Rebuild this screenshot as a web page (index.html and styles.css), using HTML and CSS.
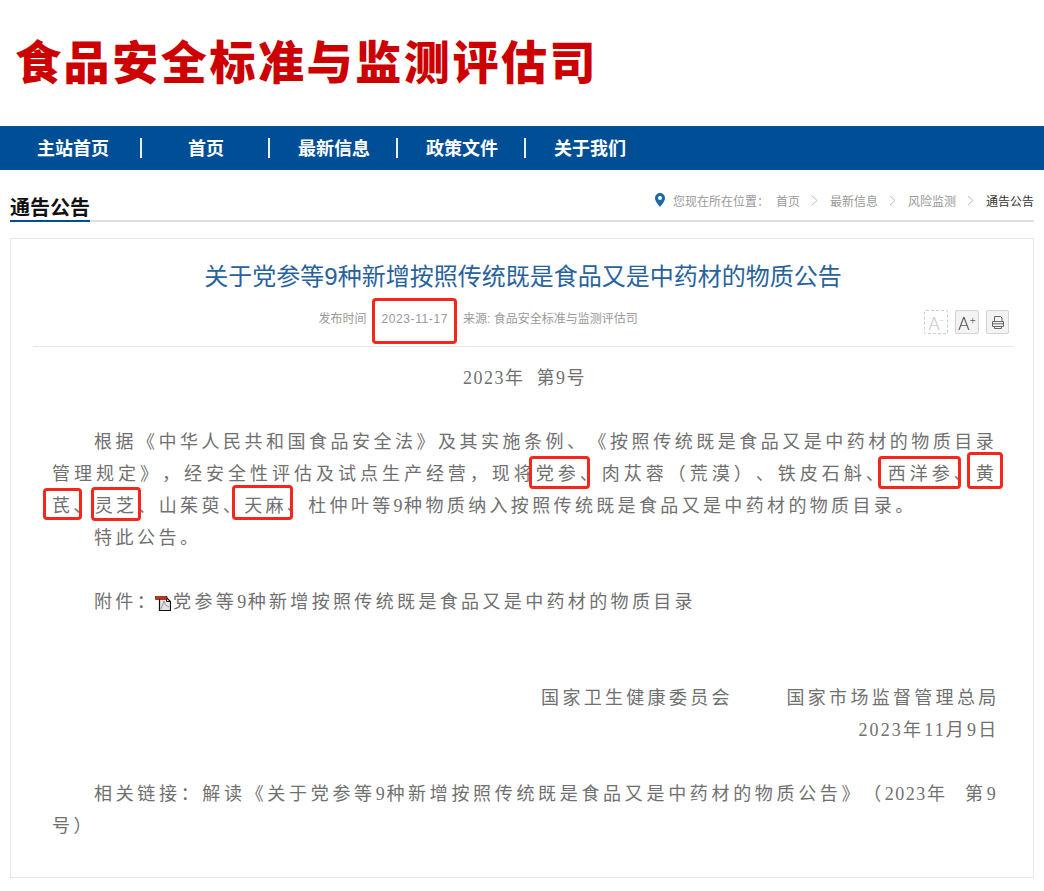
FILE: index.html
```html
<!DOCTYPE html>
<html lang="zh-CN">
<head>
<meta charset="utf-8">
<title>关于党参等9种新增按照传统既是食品又是中药材的物质公告</title>
<link rel="stylesheet" href="styles.css">
</head>
<body>
<div class="page">
  <header class="masthead"><h1 class="site-name">食品安全标准与监测评估司</h1></header>
  <nav class="nav">
    <a class="nav-item nav-first">主站首页</a>
    <a class="nav-item">首页</a>
    <a class="nav-item">最新信息</a>
    <a class="nav-item">政策文件</a>
    <a class="nav-item nav-last">关于我们</a>
  </nav>
  <div class="crumb-bar">
    <h2 class="section-title">通告公告</h2>
    <div class="crumbs">
      <svg class="pin" viewBox="0 0 10 14" width="10" height="14"><path fill="#1a69ad" fill-rule="evenodd" d="M5 0a5 5 0 0 1 5 5c0 3-3 6.500-5 9-2-2.500-5-6-5-9a5 5 0 0 1 5-5zm0 3a2 2 0 1 0 0 4 2 2 0 0 0 0-4z"/></svg>
      <span class="crumb-lead">您现在所在位置：</span>
      <span>首页</span>
      <svg class="chev" viewBox="0 0 7 11" width="7" height="11"><path fill="none" stroke="#bbb" d="M1 1l5 4.500-5 4.500"/></svg>
      <span>最新信息</span>
      <svg class="chev" viewBox="0 0 7 11" width="7" height="11"><path fill="none" stroke="#bbb" d="M1 1l5 4.500-5 4.500"/></svg>
      <span>风险监测</span>
      <svg class="chev" viewBox="0 0 7 11" width="7" height="11"><path fill="none" stroke="#bbb" d="M1 1l5 4.500-5 4.500"/></svg>
      <span class="crumb-now">通告公告</span>
    </div>
  </div>
  <main class="card">
    <h3 class="title">关于党参等9种新增按照传统既是食品又是中药材的物质公告</h3>
    <div class="meta">
      <div class="meta-text">
        <span>发布时间</span>
        <span class="meta-date">2023-11-17</span>
        <span>来源: 食品安全标准与监测评估司</span>
      </div>
      <div class="tools">
        <span class="tool tool-off">A<sup class="tool-sup">-</sup></span>
        <span class="tool">A<sup class="tool-sup">+</sup></span>
        <span class="tool tool-print"><svg viewBox="0 0 16 16" width="16" height="16"><path fill="none" stroke="#666" d="M4.500 7V2.500h6l1.500 1.500V7M2.500 7.500h11v5h-11zM4.500 12.500v2h7v-2M2.500 9.800h11"/></svg></span>
      </div>
    </div>
    <article class="body">
      <p class="center">2023年&nbsp;&nbsp;第9号</p>
      <p class="blank">&nbsp;</p>
      <p class="indent">根据《中华人民共和国食品安全法》及其实施条例、《按照传统既是食品又是中药材的物质目录管理规定》，经安全性评估及试点生产经营，现将党参、肉苁蓉（荒漠）、铁皮石斛、西洋参、黄<span class="tight">芪、灵芝、山茱萸、天麻、杜仲叶等<span class="num">9</span>种物质纳入按照传统既是食品又是中药材的物质目录。</span></p>
      <p class="indent">特此公告。</p>
      <p class="blank">&nbsp;</p>
      <p class="indent tight">附件：<svg class="file" viewBox="0 0 16 16" width="16" height="16"><path fill="#e4e4e4" stroke="#111" stroke-width="1.200" d="M4.500 2.500h7l4 4v9h-11z"/><path fill="none" stroke="#999" d="M6 14l3-8 1.500 4 3.500 2"/><path fill="none" stroke="#111" d="M11.500 1v5.500h4"/><rect x=".5" y="1.500" width="11.500" height="3" fill="#e0230f" stroke="#111" stroke-width=".5"/></svg>党参等<span class="num">9</span>种新增按照传统既是食品又是中药材的物质目录</p>
      <p class="blank">&nbsp;</p>
      <p class="blank">&nbsp;</p>
      <p class="right"><span>国家卫生健康委员会</span><span class="sign-gap">国家市场监督管理总局</span></p>
      <p class="right"><span class="num num-date">2023</span>年<span class="num num-date">11</span>月<span class="num num-date">9</span>日</p>
      <p class="blank">&nbsp;</p>
      <p class="indent">相关链接：解读《关于党参等<span class="num">9</span>种新增按照传统既是食品又是中药材的物质公告》（<span class="num">2023</span>年&nbsp;&nbsp;第<span class="num">9</span>号）</p>
    </article>
  </main>
  <i class="mark mark-date"></i>
  <i class="mark mark-dangshen"></i>
  <i class="mark mark-xiyang"></i>
  <i class="mark mark-huang"></i>
  <i class="mark mark-qi"></i>
  <i class="mark mark-lingzhi"></i>
  <i class="mark mark-tianma"></i>
</div>
</body>
</html>
```
FILE: styles.css
```css
* { box-sizing: border-box; }
html, body { margin: 0; padding: 0; background: #fff; }
body { font-family: "Liberation Sans", "Noto Sans CJK SC", sans-serif; overflow: hidden; }
h1, h2, h3, p { margin: 0; font-weight: normal; }
.page { position: relative; width: 1044px; height: 891px; }

.masthead { height: 126px; padding: 37px 0 0 15px; }
.site-name { font-size: 46px; line-height: 52px; font-weight: 900; color: #cc0000; letter-spacing: 2.600px; white-space: nowrap; }

.nav { height: 44px; background: #004f96; display: flex; align-items: center; padding-left: 14px; }
.nav-item { width: 128px; height: 20px; line-height: 22px; padding-left: 2px; font-size: 18px; font-weight: bold; color: #fff; text-align: center; border-right: 2px solid #e8eef5; }
.nav-first { padding: 0 8px 0 0; }
.nav-last { border-right: 0; padding-left: 0; }

.crumb-bar { height: 52px; margin: 0 10px; border-bottom: 2px solid #dedede; display: flex; justify-content: space-between; align-items: flex-end; position: relative; }
.section-title { font-size: 20px; line-height: 26px; font-weight: bold; color: #111; margin-bottom: -2px; border-bottom: 2px solid #004f96; height: 27px; width: 80px; white-space: nowrap; }
.crumbs { display: flex; align-items: center; height: 26px; margin-bottom: 7px; font-size: 12px; color: #999; }
.pin { margin-right: 8px; }
.crumb-lead { margin-right: 11px; width: 92px; white-space: nowrap; }
.chev { margin: 0 11.500px; }
.crumb-now { color: #333; }

.card { margin: 16px 10px 0; height: 640px; border: 1px solid #e6e6e6; padding: 0 20px 0 22px; }
.title { font-size: 24px; line-height: 36px; padding-top: 20px; height: 55px; color: #28629c; text-align: center; white-space: nowrap; }
.meta { height: 53px; border-bottom: 1px solid #e6e6e6; display: flex; justify-content: space-between; padding: 16px 4px 0 285.500px; }
.meta-text { font-size: 12px; line-height: 18px; color: #999; display: flex; gap: 15px; white-space: nowrap; }
.meta-date { letter-spacing: .6px; }
.tools { display: flex; gap: 7px; }
.tool { width: 24px; height: 24px; border: 1px solid #d4d4d4; border-radius: 2px; background: #f3f3f3; color: #222; font-family: "Lato", sans-serif; font-weight: 300; font-size: 17px; line-height: 25px; text-align: center; display: block; }
.tool-sup { font-size: 11px; line-height: 0; vertical-align: 6px; }
.tool-off { border: 1px dashed #ccc; background: #fff; color: #bbb; }
.tool-print { width: 23px; padding-top: 3px; line-height: 0; }

.body { font-family: "Liberation Serif", "Noto Sans CJK SC", serif; font-size: 18px; font-weight: 300; line-height: 32px; color: #707070; letter-spacing: 3.500px; padding: 15px 15.800px 0 19px; text-align: justify; text-spacing-trim: space-all; }
.body p { min-height: 32px; }
.num { letter-spacing: 1.500px; }
.num-date { letter-spacing: 2.100px; }
.tight { letter-spacing: 3.350px; }
.center { text-align: center; letter-spacing: 1.500px; }
.indent { text-indent: 42px; }
.right { text-align: right; margin-right: -2.300px; letter-spacing: 3.300px; }
.sign-gap { margin-left: 53.700px; }
.file { vertical-align: -3px; margin: 0 2px 0 -3px; }

.mark { position: absolute; border: 3px solid #f5261c; border-radius: 4px; display: block; }
.mark-date { left: 372px; top: 298px; width: 85px; height: 46px; }
.mark-dangshen { left: 529px; top: 456px; width: 61px; height: 33px; }
.mark-xiyang { left: 878px; top: 456px; width: 83px; height: 33px; }
.mark-huang { left: 967px; top: 452px; width: 36px; height: 37px; }
.mark-qi { left: 43px; top: 488px; width: 39px; height: 32px; }
.mark-lingzhi { left: 91px; top: 487px; width: 50px; height: 34px; }
.mark-tianma { left: 232px; top: 485px; width: 61px; height: 35px; }
```
